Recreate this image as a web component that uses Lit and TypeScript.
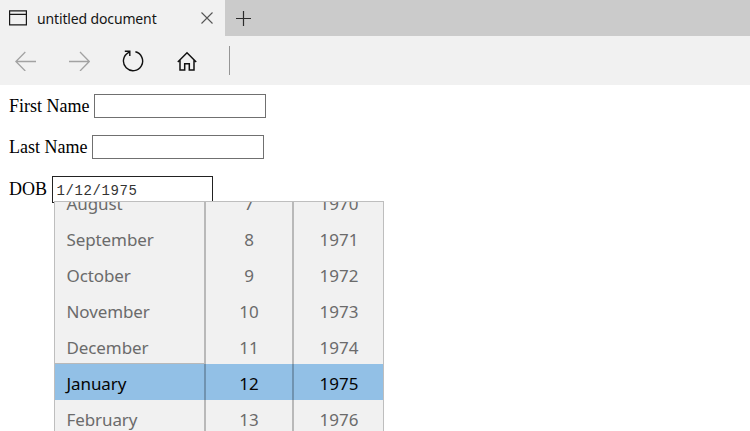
import { LitElement, html, css } from "lit";
import { customElement, property } from "lit/decorators.js";
import { classMap } from "lit/directives/class-map.js";

@customElement("browser-chrome")
class BrowserChrome extends LitElement {
  static styles = css`
    :host { display: block; background: #f1f1f1; height: 85px; font-family: "Noto Sans", sans-serif; }
    .tabs { display: flex; height: 36px; background: #cbcbcb; }
    .tab { display: flex; align-items: center; width: 225px; box-sizing: border-box; padding: 0 12px 0 9px; background: #f1f1f1; }
    .title { flex: 1; margin-left: 10px; padding-top: 1px; font-size: 14px; line-height: 20px; letter-spacing: -0.14px; color: #151515; white-space: nowrap; }
    .plus { margin: 11px 0 0 11px; }
    .tools { display: flex; align-items: center; height: 49px; }
    svg { display: block; fill: none; flex: none; }
    .back { margin-left: 15px; }
    .forward { margin-left: 32px; }
    .refresh { margin-left: 31px; }
    .home { margin-left: 33px; }
    .divider { width: 1px; height: 29px; margin-left: 32px; background: #959595; }
  `;
  render() {
    return html`
      <div class="tabs">
        <div class="tab">
          <svg width="18" height="16" viewBox="0 0 18 16" stroke="#181818" stroke-width="1.2"><path d="M.6 .8H17.4V14.8H.6ZM.6 4.3H17.4" /></svg>
          <span class="title">untitled document</span>
          <svg width="12" height="12" viewBox="0 0 12 12" stroke="#555" stroke-width="1.1"><path d="M.5 .5 11.5 11.5M11.5 .5 .5 11.5" /></svg>
        </div>
        <svg class="plus" width="15" height="15" viewBox="0 0 15 15" stroke="#2b2b2b" stroke-width="1.2"><path d="M7.5 0V15M0 7.5H15" /></svg>
      </div>
      <div class="tools">
        <svg class="back" width="21" height="20" viewBox="0 0 21 20" stroke="#a2a2a2" stroke-width="1.3"><path d="M21 10.5H1M10.3 1 .9 10.5 10.3 20" /></svg>
        <svg class="forward" width="22" height="20" viewBox="0 0 22 20" stroke="#a2a2a2" stroke-width="1.3"><path d="M1 10.5H21M12 1 21.3 10.5 12 20" /></svg>
        <svg class="refresh" width="23" height="23" viewBox="0 0 23 23" stroke="#111" stroke-width="1.4"><path d="M14.4 2.8A9.6 9.6 0 1 1 7.4 3.7L8.6 2.6M3.8 2.3H8.8V7" /></svg>
        <svg class="home" width="20" height="20" viewBox="0 0 20 20" stroke="#111" stroke-width="1.5"><path d="M.8 11 10 1.8 19.2 11M3 9V19H7.7V12.7H12.3V19H17V9" /></svg>
        <div class="divider"></div>
      </div>`;
  }
}

@customElement("picker-column")
class PickerColumn extends LitElement {
  @property({ attribute: false }) items: string[] = [];
  @property({ type: Number }) selected = 5;
  static styles = css`
    :host { display: block; }
    .item { height: 36px; line-height: 40px; padding: var(--item-padding, 0); box-sizing: border-box; color: #6b6b6b; white-space: nowrap; }
    .chosen { color: #050505; }
  `;
  render() {
    return this.items.map((t, i) => html`<div class=${classMap({ item: true, chosen: i === this.selected })}>${t}</div>`);
  }
}

@customElement("date-picker")
class DatePicker extends LitElement {
  static styles = css`
    :host { display: block; width: 330px; height: 230px; box-sizing: border-box; overflow: hidden; border: 1px solid #bebebe; border-bottom: 0; background: #f1f1f1; font: 17px "Noto Sans", sans-serif; }
    .columns { display: grid; grid-template-columns: 149px 86px 90px; column-gap: 2px; margin-top: -18px; position: relative; text-align: center; }
    .band { position: absolute; top: 180px; left: 0; right: 0; height: 36px; background: #92c0e6; }
    .month { text-align: left; --item-padding: 0 0 0 11.5px; letter-spacing: -0.1px; }
    picker-column { position: relative; }
    .month::after, .day::after { content: ""; position: absolute; top: 0; bottom: 0; right: -2px; width: 2px; background: rgba(0, 0, 0, 0.23); }
    .month::before { content: ""; position: absolute; top: 179px; left: 0; right: 0; height: 1px; background: #b9b9b9; }
  `;
  private months = ["August", "September", "October", "November", "December", "January", "February"];
  render() {
    return html`
      <div class="columns">
        <div class="band"></div>
        <picker-column class="month" .items=${this.months}></picker-column>
        <picker-column class="day" .items=${this.months.map((_, i) => String(7 + i))}></picker-column>
        <picker-column class="year" .items=${this.months.map((_, i) => String(1970 + i))}></picker-column>
      </div>`;
  }
}

@customElement("app-root")
class AppRoot extends LitElement {
  static styles = css`
    :host { display: block; width: 750px; height: 431px; overflow: hidden; background: #fff; color: #000; }
    form { position: relative; padding: 9px 9px 0; font: 18px "Liberation Serif", serif; }
    .field { display: flex; align-items: center; gap: 4.6px; height: 24px; margin-bottom: 17px; white-space: nowrap; }
    input { box-sizing: border-box; width: 172px; height: 24px; border: 1px solid #707070; border-radius: 0; padding: 0 4px; background: #fff; outline: 0; }
    .dob { align-items: flex-start; height: 26px; line-height: 26px; }
    .dob input { width: 161px; height: 27px; padding-top: 2px; border-color: #222; color: #333; font: 14px "Liberation Mono", monospace; letter-spacing: 0.6px; }
    date-picker { position: absolute; left: 54px; top: 116px; }
  `;
  render() {
    return html`
      <browser-chrome></browser-chrome>
      <form>
        <label class="field">First Name <input type="text" /></label>
        <label class="field">Last Name <input type="text" /></label>
        <label class="field dob">DOB <input type="text" .value=${"1/12/1975"} /></label>
        <date-picker></date-picker>
      </form>`;
  }
}
